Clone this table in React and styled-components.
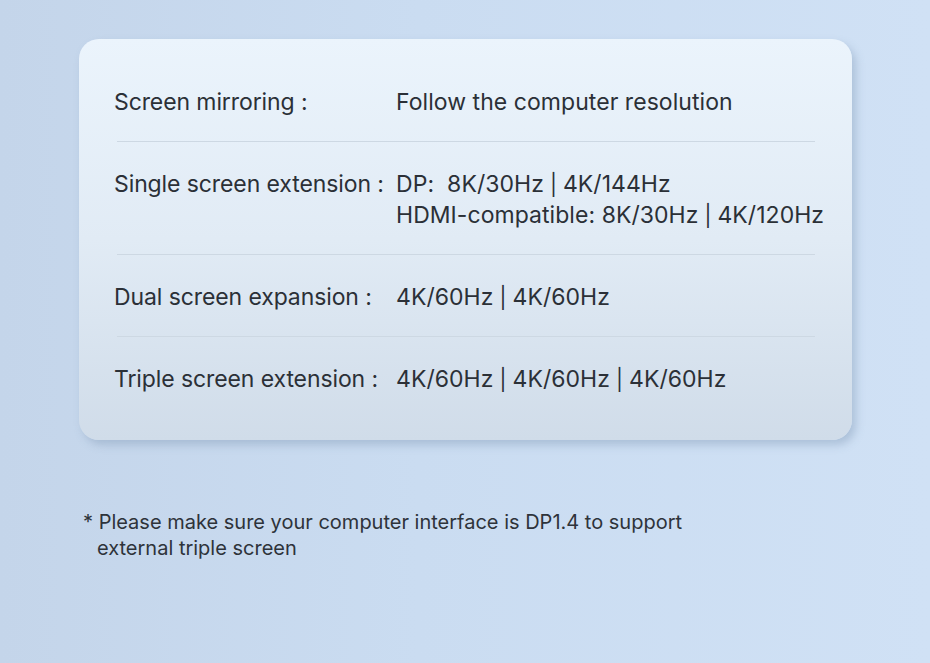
import styled, { createGlobalStyle } from 'styled-components';

const GlobalStyle = createGlobalStyle`
  html, body { margin: 0; padding: 0; }
  body {
    width: 930px;
    height: 663px;
    overflow: hidden;
    font-family: Inter, "Noto Sans", sans-serif;
  }
`;

const specs = [
  { label: 'Screen mirroring :', values: ['Follow the computer resolution'] },
  {
    label: 'Single screen extension :',
    values: ['DP:  8K/30Hz | 4K/144Hz', 'HDMI-compatible: 8K/30Hz | 4K/120Hz'],
  },
  { label: 'Dual screen expansion :', values: ['4K/60Hz | 4K/60Hz'] },
  { label: 'Triple screen extension :', values: ['4K/60Hz | 4K/60Hz | 4K/60Hz'] },
];

// split on the pipe so it can be drawn a little shorter, like the reference
const renderValue = (v) =>
  v.split(' | ').map((part, i) => (
    <span key={i}>
      {i > 0 && <Sep> | </Sep>}
      {part}
    </span>
  ));

function App() {
  return (
    <Page>
      <GlobalStyle />
      <Card>
        {specs.map((s, i) => (
          <Row key={s.label} last={i === specs.length - 1}>
            <Label>{s.label}</Label>
            <Values>
              {s.values.map((v) => (
                <Line key={v}>{renderValue(v)}</Line>
              ))}
            </Values>
          </Row>
        ))}
      </Card>
      <Note>
        <span>* Please make sure your computer interface is DP1.4 to support</span>
        <Indent>external triple screen</Indent>
      </Note>
    </Page>
  );
}

export default App;

const Page = styled.div`
  width: 930px;
  height: 663px;
  box-sizing: border-box;
  padding: 39px 0 0 79px;
  background: linear-gradient(90deg, #c4d5ea 0%, #cadcf1 45%, #d0e1f5 100%);
  color: #2b3037;
`;

const Card = styled.div`
  width: 773px;
  height: 401px;
  box-sizing: border-box;
  padding: 21px 37px 0 35px;
  border-radius: 20px;
  background: linear-gradient(180deg, #ebf4fc 0%, #e1ebf5 50%, #d0dce9 100%);
  box-shadow: 4px 5px 8px rgba(130, 155, 185, 0.45);
`;

const Row = styled.div`
  position: relative;
  display: grid;
  grid-template-columns: 282px 1fr;
  padding: 27px 0 24px;

  &::after {
    content: '';
    display: ${(p) => (p.last ? 'none' : 'block')};
    position: absolute;
    left: 3px;
    right: 0;
    bottom: 0;
    height: 1px;
    background: #cdd8e3;
  }
`;

const Label = styled.div`
  font-size: 23px;
  line-height: 31px;
  letter-spacing: -0.1px;
  white-space: pre;
`;

const Values = styled.div`
  display: flex;
  flex-direction: column;
`;

const Line = styled.div`
  font-size: 23px;
  line-height: 31px;
  letter-spacing: 0.05px;
  white-space: pre;
`;

const Sep = styled.span`
  font-size: 21px;
  line-height: 1;
`;

const Note = styled.div`
  display: flex;
  flex-direction: column;
  margin: 69px 0 0 4px;
  font-size: 20px;
  line-height: 26px;
  color: #2e333a;
`;

const Indent = styled.span`
  padding-left: 14px;
`;
